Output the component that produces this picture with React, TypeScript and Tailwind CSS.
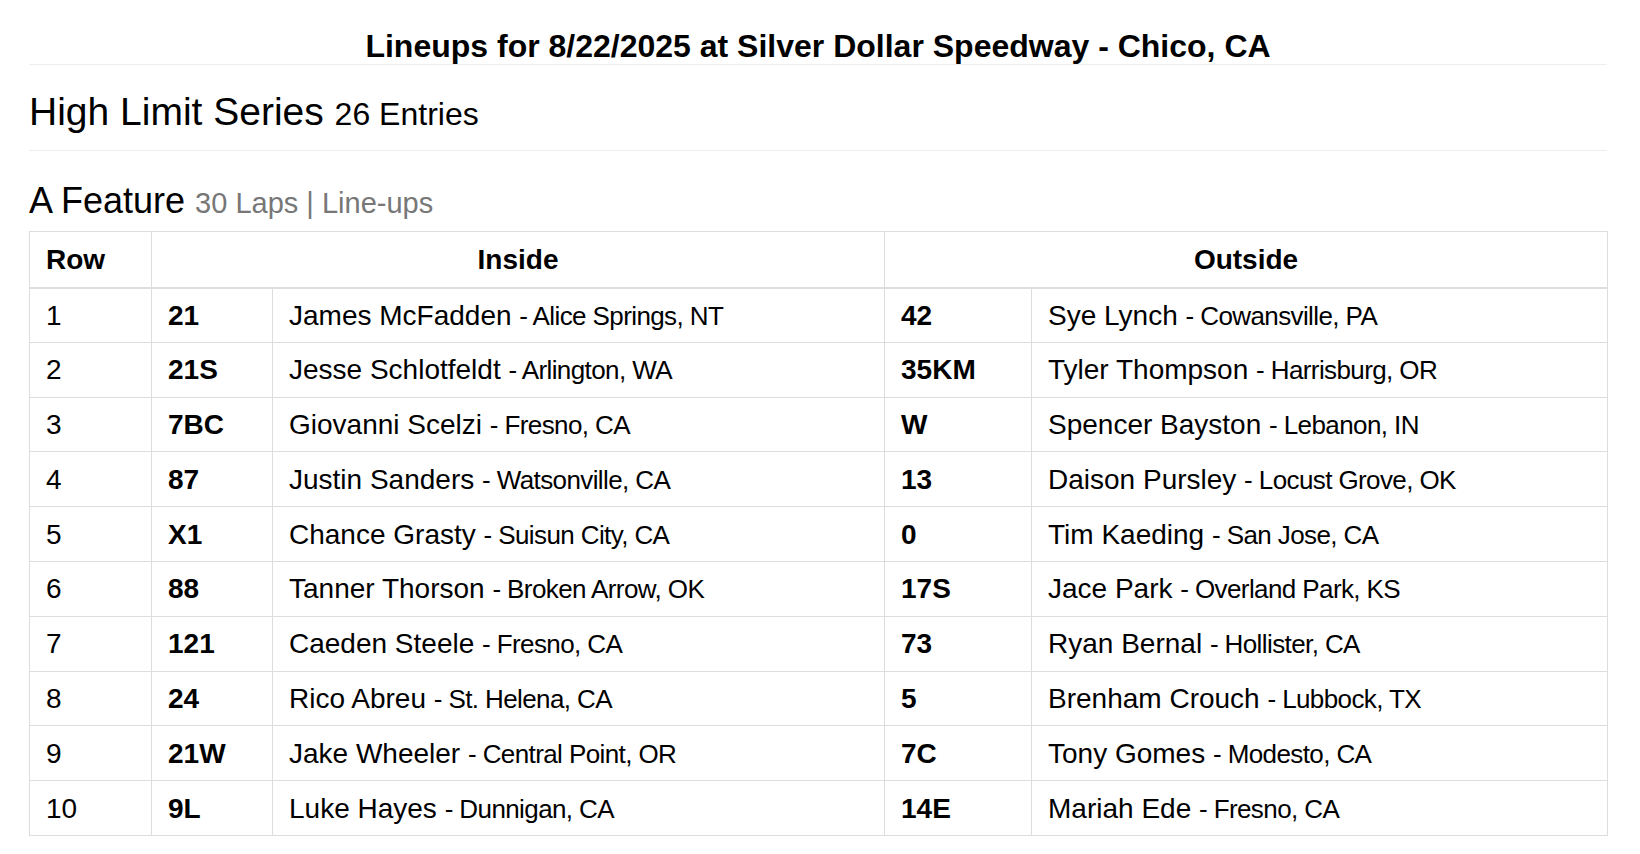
import React from "react";

type Entry = { num: string; name: string; loc: string };
type Row = { row: number; inside: Entry; outside: Entry };

const rows: Row[] = [
  { row: 1, inside: { num: "21", name: "James McFadden", loc: "Alice Springs, NT" }, outside: { num: "42", name: "Sye Lynch", loc: "Cowansville, PA" } },
  { row: 2, inside: { num: "21S", name: "Jesse Schlotfeldt", loc: "Arlington, WA" }, outside: { num: "35KM", name: "Tyler Thompson", loc: "Harrisburg, OR" } },
  { row: 3, inside: { num: "7BC", name: "Giovanni Scelzi", loc: "Fresno, CA" }, outside: { num: "W", name: "Spencer Bayston", loc: "Lebanon, IN" } },
  { row: 4, inside: { num: "87", name: "Justin Sanders", loc: "Watsonville, CA" }, outside: { num: "13", name: "Daison Pursley", loc: "Locust Grove, OK" } },
  { row: 5, inside: { num: "X1", name: "Chance Grasty", loc: "Suisun City, CA" }, outside: { num: "0", name: "Tim Kaeding", loc: "San Jose, CA" } },
  { row: 6, inside: { num: "88", name: "Tanner Thorson", loc: "Broken Arrow, OK" }, outside: { num: "17S", name: "Jace Park", loc: "Overland Park, KS" } },
  { row: 7, inside: { num: "121", name: "Caeden Steele", loc: "Fresno, CA" }, outside: { num: "73", name: "Ryan Bernal", loc: "Hollister, CA" } },
  { row: 8, inside: { num: "24", name: "Rico Abreu", loc: "St. Helena, CA" }, outside: { num: "5", name: "Brenham Crouch", loc: "Lubbock, TX" } },
  { row: 9, inside: { num: "21W", name: "Jake Wheeler", loc: "Central Point, OR" }, outside: { num: "7C", name: "Tony Gomes", loc: "Modesto, CA" } },
  { row: 10, inside: { num: "9L", name: "Luke Hayes", loc: "Dunnigan, CA" }, outside: { num: "14E", name: "Mariah Ede", loc: "Fresno, CA" } },
];

function Driver({ e }: { e: Entry }) {
  return (
    <>
      {e.name}{" "}
      <span className="text-[26px] leading-none tracking-[-0.6px]">- {e.loc}</span>
    </>
  );
}

const td = "border border-[#dddddd] px-[16px] py-[10px] whitespace-nowrap";
const th = "border border-b-2 border-[#dddddd] px-[16px] py-[10px] font-bold";

export default function App() {
  return (
    <div className="min-h-screen bg-white text-black font-['Liberation_Sans',Arial,sans-serif]">
      <div className="ml-[29px] w-[1578px]">
        <h1 className="pt-[28px] text-center text-[32px] font-bold leading-[36px] border-b border-[#eeeeee]">
          Lineups for 8/22/2025 at Silver Dollar Speedway - Chico, CA
        </h1>
        <h2 className="mt-[25px] pb-[17px] text-[39px] leading-[43px] border-b border-[#eeeeee]">
          High Limit Series <small className="text-[32px] leading-none">26 Entries</small>
        </h2>
        <h3 className="mt-[30px] text-[36px] leading-[40px]">
          A Feature <small className="text-[29px] leading-none text-[#777777]">30 Laps | Line-ups</small>
        </h3>
        <table className="mt-[10px] w-full table-fixed border-collapse border border-[#dddddd] text-[28px] leading-[33px]">
          <colgroup>
            <col className="w-[122px]" />
            <col className="w-[121px]" />
            <col className="w-[612px]" />
            <col className="w-[147px]" />
            <col className="w-[576px]" />
          </colgroup>
          <thead>
            <tr className="h-[56px]">
              <th className={`${th} text-left`}>Row</th>
              <th colSpan={2} className={`${th} text-center`}>Inside</th>
              <th colSpan={2} className={`${th} text-center`}>Outside</th>
            </tr>
          </thead>
          <tbody>
            {rows.map((r) => (
              <tr key={r.row} className="h-[54.8px]">
                <td className={td}>{r.row}</td>
                <td className={`${td} font-bold`}>{r.inside.num}</td>
                <td className={td}><Driver e={r.inside} /></td>
                <td className={`${td} font-bold`}>{r.outside.num}</td>
                <td className={td}><Driver e={r.outside} /></td>
              </tr>
            ))}
          </tbody>
        </table>
      </div>
    </div>
  );
}
